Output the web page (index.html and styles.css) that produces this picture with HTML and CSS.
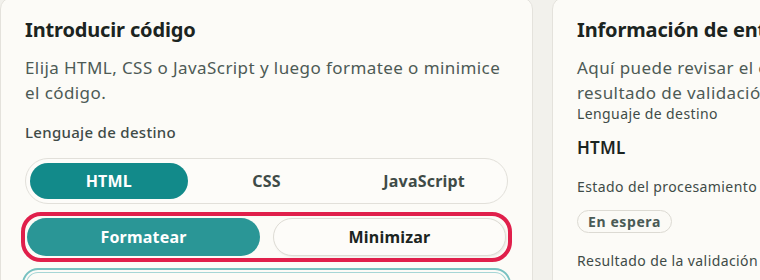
FILE: index.html
```html
<!DOCTYPE html>
<html lang="es">
<head>
<meta charset="utf-8">
<title>Formateador</title>
<link rel="stylesheet" href="styles.css">
</head>
<body>
<main class="layout">
  <section class="card">
    <h2 class="card-title">Introducir código</h2>
    <p class="card-desc">Elija HTML, CSS o JavaScript y luego formatee o minimice el código.</p>
    <div class="field-label">Lenguaje de destino</div>
    <div class="segmented">
      <button class="seg active">HTML</button>
      <button class="seg">CSS</button>
      <button class="seg">JavaScript</button>
    </div>
    <div class="actions">
      <button class="btn btn-primary">Formatear</button>
      <button class="btn btn-secondary">Minimizar</button>
    </div>
    <div class="editor"></div>
  </section>
  <section class="card">
    <h2 class="card-title">Información de entrada</h2>
    <p class="card-desc">Aquí puede revisar el estado del procesamiento y el resultado de validación.</p>
    <div class="info-label">Lenguaje de destino</div>
    <div class="info-value">HTML</div>
    <div class="info-label info-gap">Estado del procesamiento</div>
    <div class="badge-row"><span class="badge">En espera</span></div>
    <div class="info-label info-gap2">Resultado de la validación</div>
  </section>
</main>
</body>
</html>
```

FILE: styles.css
```css
* { box-sizing: border-box; }
html, body {
  margin: 0;
  padding: 0;
  background: #f2f1ec;
  overflow: hidden;
}
body {
  font-family: "Noto Sans", "Noto Sans CJK JP", sans-serif;
  color: #1b2421;
}
.layout {
  display: grid;
  grid-template-columns: 533px 533px;
  gap: 19px;
  margin-top: -3px;
  width: 1100px;
}
.card {
  background: #fcfbf7;
  border: 1px solid #e4e2dc;
  border-radius: 12px;
  padding: 19px 24px 24px;
  height: 320px;
}
.card-title {
  margin: 0;
  font-size: 20px;
  line-height: 26px;
  font-weight: 700;
  letter-spacing: -0.15px;
  color: #1b2421;
}
.card-desc {
  margin: 12px 0 0;
  font-size: 17px;
  line-height: 25px;
  letter-spacing: 0.42px;
  color: #4d5a55;
  width: 484px;
}
.field-label {
  margin-top: 17px;
  font-size: 15px;
  line-height: 20px;
  font-weight: 500;
  letter-spacing: 0.3px;
  color: #3f4b47;
}
.segmented {
  margin-top: 16px;
  display: grid;
  grid-template-columns: 1fr 1fr 1fr;
  padding: 4px;
  border: 1px solid #e2e0da;
  border-radius: 24px;
  background: #fdfcf9;
}
.seg {
  height: 36px;
  border: 0;
  border-radius: 18px;
  background: transparent;
  font-family: inherit;
  font-size: 16px;
  font-weight: 700;
  letter-spacing: 0.2px;
  color: #3f4b47;
}
.seg.active {
  background: #128a8a;
  color: #ffffff;
}
.actions {
  margin-top: 12px;
  display: grid;
  grid-template-columns: 1fr 1fr;
  gap: 13px;
  padding: 2px;
  border-radius: 16px;
  outline: 4px solid #e01f4b;
}
.btn {
  height: 38px;
  border-radius: 19px;
  font-family: inherit;
  font-size: 16px;
  font-weight: 700;
  letter-spacing: 0.2px;
}
.btn-primary {
  border: 0;
  background: #2a9696;
  color: #ffffff;
}
.btn-secondary {
  border: 1px solid #dedcd5;
  background: #fdfcf9;
  color: #1b2421;
  box-shadow: 1px 1px 2px rgba(0, 0, 0, 0.08);
}
.editor {
  margin-top: 10px;
  margin-left: -3px;
  margin-right: -3px;
  height: 80px;
  border: 2px solid #77c1c1;
  border-radius: 16px;
  box-shadow: inset 0 0 0 2px #fcfbf7, inset 0 0 0 3px #a6d6d6;
}
.info-label {
  font-size: 14px;
  line-height: 18px;
  letter-spacing: 0.4px;
  color: #3f4b47;
}
.info-value {
  margin-top: 13px;
  font-size: 17px;
  line-height: 24px;
  font-weight: 600;
  letter-spacing: 0.2px;
  color: #1b2421;
}
.info-gap { margin-top: 18px; }
.badge-row {
  margin-top: 14px;
  display: flex;
}
.badge {
  height: 23px;
  padding: 0 10px;
  display: inline-flex;
  align-items: center;
  border: 1px solid #dcdad3;
  border-radius: 12px;
  background: #fbfaf6;
  font-size: 14px;
  font-weight: 700;
  letter-spacing: 0.6px;
  color: #4a5a55;
}
.info-gap2 { margin-top: 19px; }
```
